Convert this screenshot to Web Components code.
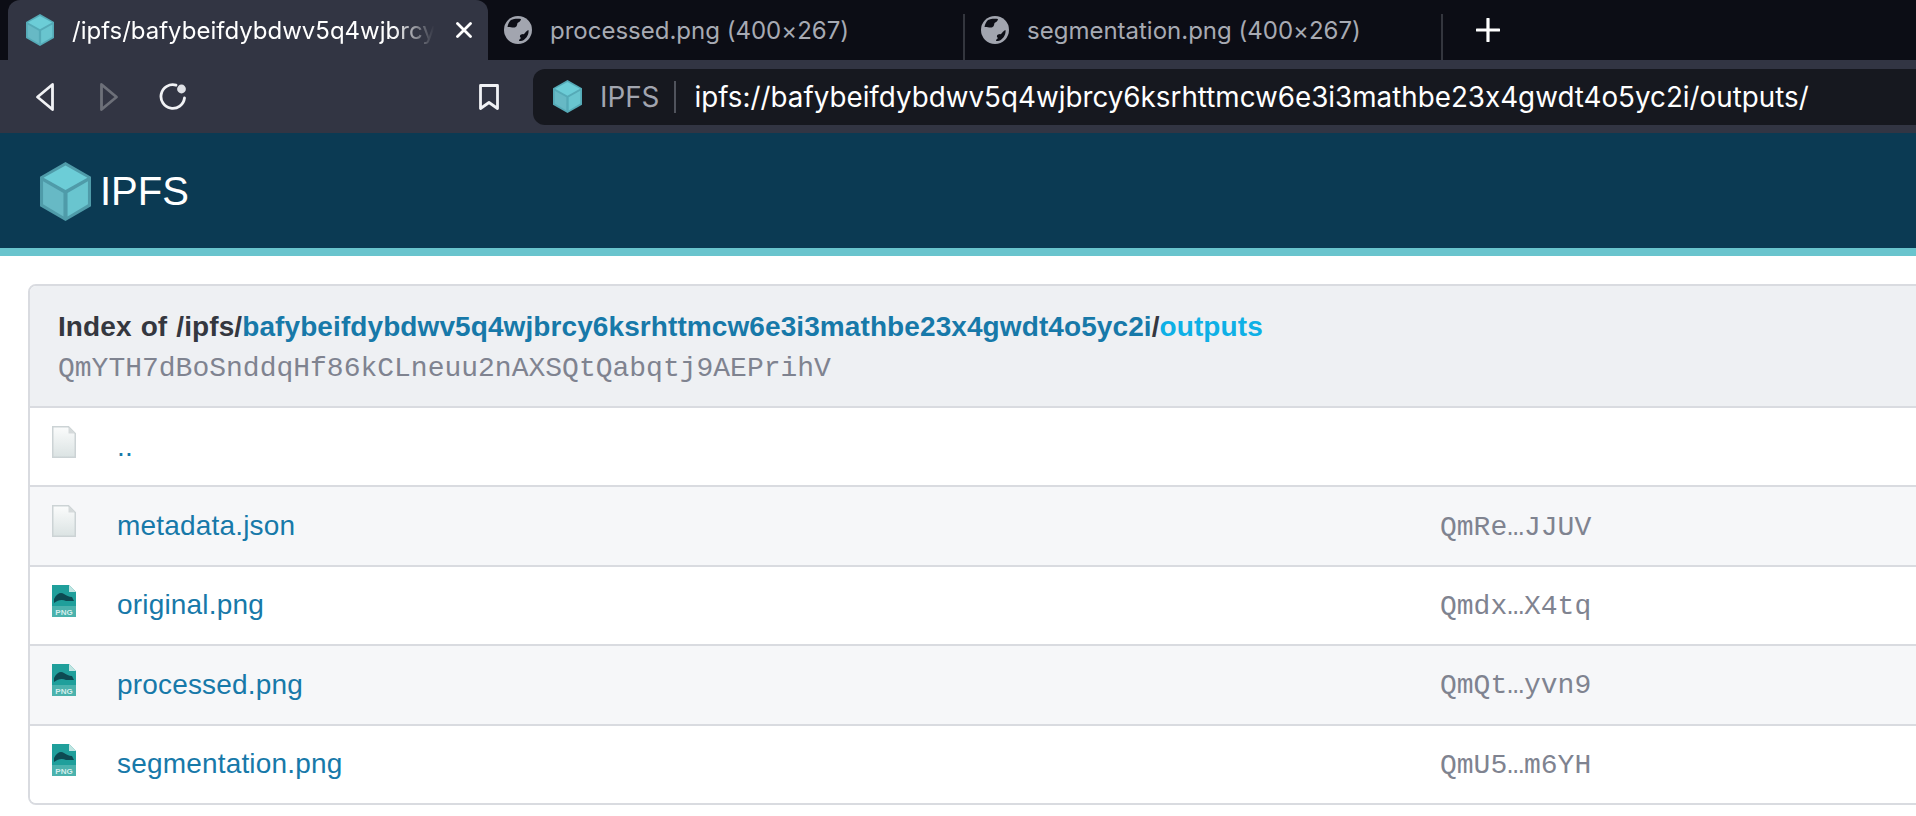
<!DOCTYPE html>
<html lang="en"><head><meta charset="utf-8"><title>IPFS index</title>
<style>
html,body{margin:0;padding:0;background:#fff;overflow:hidden;height:816px;width:1916px}
body{font-family:"Liberation Sans",Arial,sans-serif}
dir-listing a{color:#1779a9}
dir-listing b{color:#0eb0e6}
</style></head><body>
<browser-chrome></browser-chrome>
<ipfs-header></ipfs-header>
<dir-listing>
  <span slot="path">Index of /ipfs/<a>bafybeifdybdwv5q4wjbrcy6ksrhttmcw6e3i3mathbe23x4gwdt4o5yc2i</a>/<b>outputs</b></span>
  <span slot="hash">QmYTH7dBoSnddqHf86kCLneuu2nAXSQtQabqtj9AEPrihV</span>
  <dir-row type="file" name=".." hash=""></dir-row>
  <dir-row type="file" name="metadata.json" hash="QmRe…JJUV" alt></dir-row>
  <dir-row type="png" name="original.png" hash="Qmdx…X4tq"></dir-row>
  <dir-row type="png" name="processed.png" hash="QmQt…yvn9" alt></dir-row>
  <dir-row type="png" name="segmentation.png" hash="QmU5…m6YH"></dir-row>
</dir-listing>
<script>
const def=(n,html)=>{class C extends HTMLElement{connectedCallback(){if(this.shadowRoot)return;const r=this.attachShadow({mode:'open'});r.innerHTML=typeof html==='function'?html(this):html;}}customElements.define(n,C);};

def('cube-icon',h=>{const e=h.hasAttribute('soft')?'#55aab7':'#4f9ba9';return `<style>:host{display:block;flex:none;width:${h.getAttribute('w')}px;height:${h.getAttribute('h')}px}svg{display:block;width:100%;height:100%}</style>
<svg viewBox="0 0 100 116" preserveAspectRatio="none">
<polygon points="50,0 100,29 100,87 50,116 0,87 0,29" fill="${e}"/>
<polygon points="50,7 93,31 50,55 7,31" fill="#6ccdd7"/>
<polygon points="6,38 46,61 46,107 6,83" fill="#67b9c5"/>
<polygon points="54,61 94,38 94,83 54,107" fill="#69c5cf"/>
</svg>`});

def('globe-icon',`<style>:host{display:block;flex:none;width:28px;height:28px}svg{display:block}</style>
<svg width="28" height="28" viewBox="0 0 28 28">
<circle cx="14" cy="14" r="14" fill="#a2a5af"/>
<path d="M7 4C10 2.500 14 2.500 17 3C17 5 15 6 13.500 7C13 9 13 11 10.500 11.500C8 12 6 10.500 3.500 11C4 8 5 6 7 4Z" fill="#0d0e16"/>
<path d="M24.500 14C25 18 23 22 19 24.500C17.500 25 16.500 25 15 25C15 23.500 16 23 17 22C15.500 21 15.500 19.500 17 18.500C19 18 20 18.500 21 17C22 15.500 23 14.500 24.500 14Z" fill="#0d0e16"/>
</svg>`);

def('browser-tab',h=>{const a=h.hasAttribute('active');return `<style>
:host{display:flex;align-items:center;box-sizing:border-box;height:60px;flex:none;width:${h.getAttribute('w')}px;padding-left:${a?18:16}px;gap:18px;position:relative;
color:${a?'#fff':'#a7aab3'};font:24px Inter,"Liberation Sans",sans-serif;font-feature-settings:"calt" 0;${a?'background:#323543;border-radius:12px 12px 0 0;margin-left:8px;padding-right:16px':''}}
:host([sep])::after{content:"";position:absolute;right:0;top:14px;bottom:0;width:2px;background:#34363e}
.t{flex:1;min-width:0;white-space:nowrap;overflow:hidden;${a?'-webkit-mask-image:linear-gradient(90deg,#000 88%,transparent 99%);mask-image:linear-gradient(90deg,#000 88%,transparent 99%);':''}}
svg{display:block;flex:none}
</style><slot name="icon"></slot><span class="t"><slot></slot></span>${a?`<svg width="16" height="16" viewBox="0 0 16 16"><path d="M1.500 1.500 14.500 14.500M14.500 1.500 1.500 14.500" stroke="#fff" stroke-width="2.800" stroke-linecap="round"/></svg>`:''}`});

def('tool-icon',h=>{const k=h.getAttribute('kind');const p={
back:`<svg width="20" height="30" viewBox="0 0 20 30"><path d="M17.500 2.500 2.500 15 17.500 27.500Z" fill="none" stroke="currentColor" stroke-width="2.800" stroke-linejoin="round"/></svg>`,
fwd:`<svg width="20" height="30" viewBox="0 0 20 30"><path d="M2.500 2.500 17.500 15 2.500 27.500Z" fill="none" stroke="currentColor" stroke-width="2.800" stroke-linejoin="round"/></svg>`,
reload:`<svg width="28" height="28" viewBox="0 0 28 28"><path d="M17 2.200A11.800 11.800 0 1 0 25.500 15" fill="none" stroke="currentColor" stroke-width="2.800" stroke-linecap="round"/><circle cx="22.500" cy="6" r="4.400" fill="#dfe1e6"/></svg>`,
mark:`<svg width="22" height="28" viewBox="0 0 22 28"><path d="M2.500 2.500H19.500V25.500L11 19.500 2.500 25.500Z" fill="none" stroke="currentColor" stroke-width="2.800" stroke-linejoin="round"/></svg>`}[k];
return `<style>:host{display:block;line-height:0;color:${k==='fwd'?'#6d7079':'#f1f2f5'}}svg{display:block}</style>${p}`});

def('address-bar',`<style>
:host{display:flex;align-items:center;flex:1;height:56px;background:#16181f;border-radius:12px 0 0 12px;padding-left:20px;font:27.790px Inter,"Liberation Sans",sans-serif;font-feature-settings:"calt" 0;color:#fff;min-width:0}
.n{color:#a2a5af;margin-left:18px}
.d{width:2px;height:32px;background:#50535c;margin:0 18px 0 15px}
.u{white-space:nowrap}
</style><slot name="icon"></slot><span class="n">IPFS</span><span class="d"></span><span class="u"><slot></slot></span>`);

def('browser-chrome',`<style>
:host{display:block;background:#0c0d15}
.tabs{display:flex;height:60px}
.plus{flex:none;display:flex;align-items:center;margin-left:33px}
.bar{display:flex;align-items:center;height:73px;background:#323543;box-sizing:border-box}
.nav{display:flex;align-items:center;padding-left:35px}
.back{margin-right:44px}.fwd{margin-right:40px}.rel{margin-right:291px}.mk{margin-right:33px}
</style>
<div class="tabs">
<browser-tab active w="480"><cube-icon slot="icon" soft w="28" h="32"></cube-icon>/ipfs/bafybeifdybdwv5q4wjbrcy</browser-tab>
<browser-tab sep w="477"><globe-icon slot="icon"></globe-icon>processed.png (400×267)</browser-tab>
<browser-tab sep w="478"><globe-icon slot="icon"></globe-icon>segmentation.png (400×267)</browser-tab>
<div class="plus"><svg width="24" height="24" viewBox="0 0 24 24"><path d="M12 1V23M1 12H23" stroke="#fff" stroke-width="3.200" stroke-linecap="round"/></svg></div>
</div>
<div class="bar"><div class="nav">
<tool-icon class="back" kind="back"></tool-icon><tool-icon class="fwd" kind="fwd"></tool-icon><tool-icon class="rel" kind="reload"></tool-icon><tool-icon class="mk" kind="mark"></tool-icon></div>
<address-bar><cube-icon slot="icon" soft w="29" h="33"></cube-icon>ipfs://bafybeifdybdwv5q4wjbrcy6ksrhttmcw6e3i3mathbe23x4gwdt4o5yc2i/outputs/</address-bar>
</div>`);

def('ipfs-header',`<style>
:host{display:flex;align-items:center;height:114px;background:#0b3a53;border-bottom:8px solid #69c4cd;padding:1px 0 0 40px;gap:9px;color:#fff;font:40px "Liberation Sans",Arial,sans-serif}
</style><cube-icon w="51" h="59"></cube-icon><span>IPFS</span>`);

def('file-icon',h=>h.getAttribute('type')==='png'?`<style>:host{display:block;width:24px;height:32px}svg{display:block}</style>
<svg width="24" height="32" viewBox="0 0 24 32"><path d="M0 0H17L24 7V32H0Z" fill="#1f9f9b"/><path d="M17 0 24 7H17Z" fill="#bfe5e2"/>
<path d="M2 14C5 8 9 7 12 9C14 10 17 12 20 12L22 16H14C10 14 6 15 2 18Z" fill="#0d4a52"/>
<rect x="0" y="21" width="24" height="11" fill="#4bb2ad"/><text x="12" y="29.500" text-anchor="middle" font-family="Liberation Sans,sans-serif" font-weight="700" font-size="8" fill="#d5eeec">PNG</text></svg>`:`<style>:host{display:block;width:24px;height:32px}svg{display:block}</style>
<svg width="24" height="32" viewBox="0 0 24 32"><defs><linearGradient id="g" x1="0" y1="0" x2="0" y2="1"><stop offset="0" stop-color="#fbfcfc"/><stop offset="1" stop-color="#dbe3e3"/></linearGradient></defs><path d="M.75.75H16.500L23.250 7.500V31.250H.75Z" fill="url(#g)" stroke="#ccd3d5" stroke-width="1.500"/><path d="M16.500.75 23.250 7.500H16.500Z" fill="#d5dadb"/></svg>`);

def('dir-row',h=>`<style>
:host{display:grid;grid-template-columns:87px 1323px 1fr;box-sizing:border-box;height:79.400px;border-top:2px solid #d9dbe0;background:${h.hasAttribute('alt')?'#f6f7f9':'#fff'};font:28px/1 "Liberation Sans",Arial,sans-serif;align-items:center}
file-icon{margin:18px 0 0 22px;align-self:start}
.n{color:#1779a9;letter-spacing:.18px}
.h{font:28px/1 "Liberation Mono","Courier New",monospace;color:#7f8390;padding-top:3px}
</style><file-icon type="${h.getAttribute('type')}"></file-icon><span class="n">${h.getAttribute('name')}</span><span class="h">${h.getAttribute('hash')}</span>`);

def('dir-listing',`<style>
:host{display:block;box-sizing:border-box;width:1960px;margin:28px 0 0 28px;border:2px solid #d9dbe0;border-radius:8px;overflow:hidden;background:#fff}
.head{background:#eef0f3;box-sizing:border-box;height:120px;padding:21px 0 0 28px}
.p{font:700 28px/40px "Liberation Sans",Arial,sans-serif;color:#34373f;white-space:nowrap;letter-spacing:.09px;word-spacing:1.200px}
.m{font:28px/40px "Liberation Mono","Courier New",monospace;color:#7f8390;margin-top:2px;white-space:nowrap}
</style><div class="head"><div class="p"><slot name="path"></slot></div><div class="m"><slot name="hash"></slot></div></div><slot></slot>`);
</script>
</body></html>
